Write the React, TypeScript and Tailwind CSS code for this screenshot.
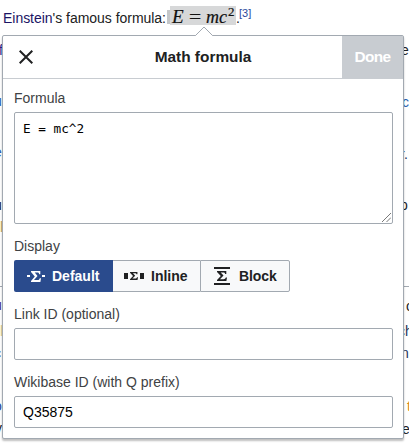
import React from "react";

const sans = "font-['Liberation_Sans',Arial,sans-serif]";

type Fragment = { text: string; place: string };

// Pieces of the article text that remain visible beside the dialog.
const fragments: Fragment[] = [
  { text: "f", place: "left-[-1px] top-[41px] text-[#2a1f8f]" },
  { text: "u", place: "left-[-6px] top-[92px] text-[#2a5fb0]" },
  { text: "e", place: "left-[-6px] top-[143px] text-[#2a5fb0]" },
  { text: "u", place: "left-[-6px] top-[196px] text-[#202122]" },
  { text: "l", place: "left-0 top-[218px] text-[#c9a860]" },
  { text: "u", place: "left-[-6px] top-[296px] text-[#4b2a80]" },
  { text: "l", place: "left-0 top-[322px] text-[#e0cf90]" },
  { text: "c", place: "left-[-6px] top-[344px] text-[#202122]" },
  { text: "o", place: "left-[-6px] top-[397px] text-[#2a4b9d]" },
  { text: "v", place: "left-[-5px] top-[419px] text-[#202122]" },
  { text: "e", place: "left-[401px] top-[41px] text-[#202122]" },
  { text: "c", place: "left-[402px] top-[93px] text-[#2a5fb0]" },
  { text: "r.", place: "left-[400px] top-[145px] text-[#26355c]" },
  { text: "p", place: "left-[400px] top-[196px] text-[#202122]" },
  { text: "c", place: "left-[406px] top-[297px] text-[#202122]" },
  { text: "ch", place: "left-[398px] top-[322px] text-[#26355c]" },
  { text: "n", place: "left-[401px] top-[344px] text-[#26355c]" },
  { text: "t", place: "left-[407px] top-[397px] text-[#d88a1c]" },
  { text: "e", place: "left-[402px] top-[420px] text-[#202122]" },
];

function Sigma({ className }: { className: string }) {
  return (
    <svg className={className} viewBox="0 0 10 11" fill="currentColor" preserveAspectRatio="none">
      <path d="M0 0h9.3v3.2H8.1C7.9 2 7.4 1.6 6.2 1.6H3.7L6.5 5 3 9.1h3.6c1.2 0 1.8-.6 2.2-1.9H10L9.4 11H0V9.9l3.8-4.5L0 1z" />
    </svg>
  );
}

export default function App() {
  return (
    <div className={`relative h-[445px] w-[409px] overflow-hidden bg-white text-[14px] leading-[18px] text-[#202122] ${sans}`}>
      <p className="flex h-[35px] items-start pl-[3px] pt-[9px] whitespace-nowrap">
        <span className="w-[164px] tracking-[-0.03px]"><span className="text-[#1b1464]">Einstein</span>'s famous formula:</span>
        <span className="mt-px h-[14px] w-[3px] bg-[#c4c6c8]" />
        <span className="-mt-[3px] flex h-[19px] w-[66px] bg-[#d7d8d9] pl-[2px] font-['Liberation_Serif',serif] text-[18px] leading-[22px] text-[#111] [-webkit-text-stroke:0.2px_#111]">
          <i className="w-[17px] origin-left scale-x-[1.06]">E</i>
          <span className="w-[17px] origin-left scale-x-[1.2]">=</span>
          <i className="w-[22px]">mc</i>
          <span className="-mt-[5px] text-[13px]">2</span>
        </span>
        <span className="w-[3px]">.</span>
        <span className="-mt-[5px] text-[11px] text-[#2a4b9d]">[3]</span>
      </p>
      <div className="absolute top-[286px] h-px w-[409px] bg-[#a2a9b1]" />
      {fragments.map((f, i) => (
        <span key={i} className={`absolute leading-[18px] ${f.place}`}>{f.text}</span>
      ))}
      <section className="absolute left-[2px] top-[35px] h-[404px] w-[402px] rounded-[2px] border border-[#a2a9b1] bg-white shadow-[0_2px_2px_0_rgba(0,0,0,0.25)]">
        <svg className="absolute left-[191px] top-[-10px] h-[11px] w-[20px]" viewBox="0 0 20 11">
          <path d="M1 10L10 1l9 9v1H1z" fill="white" />
          <path d="M1 9.5h.5L10 1l8.500 8.500h.5" fill="none" stroke="#a2a9b1" />
        </svg>
        <header className="flex h-[43px] items-center border-b border-[#c8ccd1]">
          <button aria-label="Close" className="flex w-[61px] pl-[16px]">
            <svg className="h-[14px] w-[14px]" viewBox="0 0 14 14" fill="none" stroke="#202122" strokeWidth="2">
              <path d="M.7.700l12.600 12.600M13.300.700L.7 13.300" />
            </svg>
          </button>
          <h1 className="flex-1 text-center text-[15.400px] font-bold">Math formula</h1>
          <button className="h-[43px] w-[61px] bg-[#c8ccd1] text-[15.400px] font-bold tracking-[-0.6px] text-white">Done</button>
        </header>
        <main className="pl-[11px] pr-[10px] pt-[10px]">
          <label className="block h-[23px] text-[#404244]">Formula</label>
          <div className="relative h-[112px] rounded-[2px] border border-[#a2a9b1] px-[8px] pt-[7px] font-['DejaVu_Sans_Mono',monospace] text-[12.700px] text-black">
            E = mc^2
            <svg className="absolute bottom-px right-px h-[9px] w-[9px]" viewBox="0 0 9 9" stroke="#555" strokeWidth=".8">
              <path d="M0 9L9 0M4.500 9L9 4.500" />
            </svg>
          </div>
          <label className="mt-[13px] block h-[23px] text-[#404244]">Display</label>
          <div className="flex h-[32px] w-[276px] text-[14px] font-bold">
            <button className="flex w-[99px] items-center rounded-l-[2px] bg-[#2a4b8d] pl-[13px] text-white">
              <i className="h-[2px] w-[3px] bg-white" />
              <Sigma className="mx-px h-[11px] w-[10px]" />
              <i className="mr-[7px] h-[2px] w-[3px] bg-white" />
              Default
            </button>
            <button className="flex w-[87px] items-center border-y border-[#a2a9b1] bg-[#f8f9fa] pl-[11px]">
              <i className="h-[6px] w-[4px] bg-[#202122]" />
              <Sigma className="mx-[2px] h-[8px] w-[8px]" />
              <i className="mr-[7px] h-[6px] w-[4px] bg-[#202122]" />
              Inline
            </button>
            <button className="flex flex-1 items-center rounded-r-[2px] border border-[#a2a9b1] bg-[#f8f9fa] pl-[13px] tracking-[-0.1px]">
              <span className="mr-[9px] flex h-[18px] w-[16px] flex-col items-center justify-between border-y-2 border-[#202122] py-[2px]">
                <Sigma className="h-[10px] w-[10px]" />
              </span>
              Block
            </button>
          </div>
          <label className="mt-[13px] block h-[23px] text-[#404244]">Link ID (optional)</label>
          <div className="h-[32px] rounded-[2px] border border-[#a2a9b1]" />
          <label className="mt-[13px] block h-[23px] text-[#404244]">Wikibase ID (with Q prefix)</label>
          <div className="flex h-[32px] items-center rounded-[2px] border border-[#a2a9b1] px-[8px] text-black">Q35875</div>
        </main>
      </section>
    </div>
  );
}
